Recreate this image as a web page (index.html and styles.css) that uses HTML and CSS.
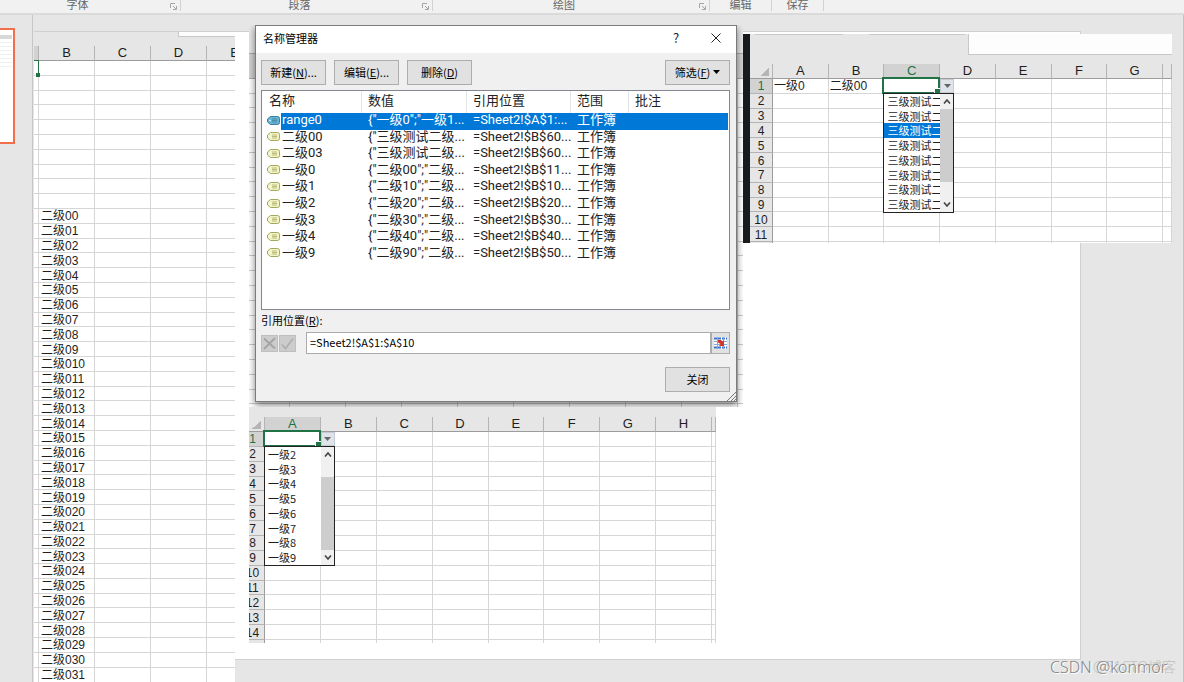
FILE: index.html
```html
<!DOCTYPE html>
<html lang="zh-CN">
<head>
<meta charset="utf-8">
<title>名称管理器</title>
<link rel="stylesheet" href="styles.css">
</head>
<body>
<header class="ribbon">
  <div class="group group-font"><span>字体</span><svg class="launcher" viewBox="0 0 7 7"><path d="M.5 5V.5H5M3 3l3 3M6.500 3v3.500H3"/></svg></div>
  <div class="group group-para"><span>段落</span><svg class="launcher" viewBox="0 0 7 7"><path d="M.5 5V.5H5M3 3l3 3M6.500 3v3.500H3"/></svg></div>
  <div class="group group-draw"><span>绘图</span><svg class="launcher" viewBox="0 0 7 7"><path d="M.5 5V.5H5M3 3l3 3M6.500 3v3.500H3"/></svg></div>
  <div class="group group-edit"><span>编辑</span></div>
  <div class="group group-save"><span>保存</span></div>
</header>
<main class="workspace">
  <aside class="thumbs"><div class="thumb"><div class="thumb-sheet"></div></div></aside>
  <section class="stage">
    <div class="slide">

      <div class="picture pic-left">
        <div class="band"><div class="band-box"></div></div>
        <table class="sheet sheet-left" data-rows="42" data-cols="B,C,D,E" data-sliver="1"></table>
      </div>

      <div class="picture pic-dialog">
        <div class="dialog" role="dialog" aria-labelledby="dlg-title">
          <div class="titlebar">
            <h1 id="dlg-title">名称管理器</h1>
            <button class="tb-btn help" aria-label="帮助">?</button>
            <button class="tb-btn" aria-label="关闭窗口"><svg width="10" height="10" viewBox="0 0 10 10"><path d="M.5.5l9 9M9.500.5l-9 9" stroke="#222" fill="none"/></svg></button>
          </div>
          <div class="dialog-body">
            <div class="toolbar">
              <button class="btn">新建(<u>N</u>)...</button>
              <button class="btn">编辑(<u>E</u>)...</button>
              <button class="btn">删除(<u>D</u>)</button>
              <button class="btn filter"><span>筛选(<u>F</u>)</span><svg width="7" height="4" viewBox="0 0 7 4"><path d="M0 0h7L3.500 4z"/></svg></button>
            </div>
            <div class="listbox">
              <table class="names">
                <colgroup><col class="c-name"><col class="c-value"><col class="c-ref"><col class="c-scope"><col></colgroup>
                <thead><tr><th>名称</th><th>数值</th><th>引用位置</th><th>范围</th><th>批注</th></tr></thead>
                <tbody id="names"></tbody>
              </table>
            </div>
            <label class="ref-label" for="ref">引用位置(<u>R</u>):</label>
            <div class="ref-row">
              <button class="mini" disabled aria-label="取消"><svg width="15" height="15" viewBox="0 0 15 15"><path d="M2 2.500l11 10M13 2L2 13" stroke="#a3a3a3" stroke-width="1.800" fill="none"/></svg></button>
              <button class="mini" disabled aria-label="确认"><svg width="15" height="15" viewBox="0 0 15 15"><path d="M2 8.500l3.500 4L13 2.500" stroke="#b0b0b0" stroke-width="1.800" fill="none"/></svg></button>
              <div class="field"><input id="ref" type="text" value="=Sheet2!$A$1:$A$10"><button class="picker" aria-label="选择区域"><svg width="13" height="12" viewBox="0 0 13 12"><path fill="#fff" d="M0 0h13v12H0z"/><path d="M0 1.500h13M0 10.500h13" stroke="#3d6fc4" stroke-width="2" stroke-dasharray="3 1"/><path d="M0 4.500h13M0 7.500h13M3.500 0v12M9.500 0v12" stroke="#86a9dc"/><path d="M4 3h3l1.500 1.500L10 3.500V9H5l1.500-2L4 5.500z" fill="#d8331f"/></svg></button></div>
            </div>
            <div class="actions"><button class="btn">关闭</button></div>
          </div>
          <svg class="grip" width="9" height="9" viewBox="0 0 9 9"><path d="M0 9L9 0M4 9l5-5M7 9l2-2" stroke="#777" fill="none"/></svg>
        </div>
      </div>

      <div class="picture pic-right">
        <div class="band"><div class="tab-edge"></div><div class="tab-edge"></div><div class="band-box"></div></div>
        <table class="sheet sheet-right" data-rows="12" data-cols="A,B,C,D,E,F,G," data-active="C" data-list="三级测试二,三级测试二,三级测试二,三级测试二,三级测试二,三级测试二,三级测试二,三级测试二" data-picked="2"></table>
      </div>

      <div class="picture pic-lower">
        <div class="band"></div>
        <table class="sheet sheet-lower" data-rows="15" data-cols="A,B,C,D,E,F,G,H," data-active="A" data-list="一级2,一级3,一级4,一级5,一级6,一级7,一级8,一级9" data-picked="-1"></table>
      </div>
    </div>
    <div class="watermark"><span class="wm-back">@51CTO博客</span><span class="wm-front">CSDN @konmor</span></div>
  </section>
</main>
<script src="script.js"></script>
</body>
</html>
```
FILE: styles.css
```css
* { box-sizing: border-box; }
body {
  margin: 0;
  height: 100vh;
  display: flex;
  flex-direction: column;
  overflow: hidden;
  background: #e6e6e6;
  color: #1e1e1e;
  font: 11px/14px "Noto Sans CJK SC", sans-serif;
}
button, input { font: inherit; color: inherit; margin: 0; padding: 0; border-radius: 0; }

.ribbon {
  flex: none;
  display: flex;
  height: 15px;
  background: #f1f1f1;
  border-bottom: 2px solid #dadada;
  color: #666;
}
.group {
  display: flex;
  justify-content: center;
  position: relative;
  height: 11px;
  line-height: 9px;
  border-right: 1px solid #d2d2d2;
}
.group-font { width: 181px; padding-right: 25px; }
.group-para { width: 252px; padding-right: 14px; }
.group-draw { width: 277px; padding-right: 14px; }
.group-edit { width: 62px; }
.group-save { width: 52px; }
.launcher {
  position: absolute;
  right: 3px;
  top: 3px;
  width: 7px;
  height: 7px;
  fill: none;
  stroke: #a5a5a5;
}

.workspace { flex: 1; display: flex; min-height: 0; }
.thumbs { width: 33px; flex: none; border-right: 1px solid #c6c6c6; padding-top: 13px; }
.thumb {
  width: 15px;
  height: 116px;
  background: #fff;
  border: 2px solid #f36f4b;
  border-left: 0;
  padding-top: 5px;
}
.thumb-sheet {
  height: 33px;
  border-top: 4px solid #d8d8d8;
  background: repeating-linear-gradient(#fff 0 3px, #f0f0f0 3px 4px);
  margin-right: 1px;
}

.stage {
  flex: 1;
  position: relative;
  display: flex;
  min-width: 0;
  padding: 16px 102px 22px 1px;
  border-right: 1px solid #c3c3c3;
  overflow: hidden;
}
.slide {
  flex: 1;
  position: relative;
  background: #fff;
  border: 1px solid #d0d0d0;
  border-left: 0;
}

.picture { position: absolute; overflow: hidden; background: #fff; }
.pic-left { left: 0; top: 0; bottom: -23px; width: 201px; }
.pic-dialog { left: 215px; top: -7px; width: 494px; height: 382px; }
.pic-right { left: 709px; top: 2px; width: 429px; height: 209px; border-left: 7px solid #171b1e; }
.pic-lower { left: 215px; top: 375px; width: 467px; height: 236px; }

.band { display: flex; background: #e6e6e6; }
.band-box { background: #fdfdfd; border: 1px solid #c8c8c8; border-top: 0; border-right: 0; }
.pic-left .band { height: 14px; justify-content: flex-end; }
.pic-left .band-box { width: 57px; height: 5px; }
.pic-right .band { height: 30px; padding-left: 5px; }
.pic-right .band-box { flex: 1; height: 21px; }
.tab-edge { width: 88px; height: 1px; background: #c8c8c8; margin-right: 26px; }
.tab-edge + .tab-edge { width: 96px; margin-right: 3px; }
.pic-lower .band { height: 10px; }

.sheet {
  table-layout: fixed;
  border-collapse: separate;
  border-spacing: 0;
  font: 12px/12px "Liberation Sans", "Noto Sans CJK SC", sans-serif;
  white-space: nowrap;
}
.sheet th, .sheet td { padding: 0; border: 0 solid #d6d6d6; border-width: 0 1px 1px 0; }
.sheet tbody th, .sheet tbody td { height: 14px; padding-top: 1px; }
.sheet tbody td { padding-left: 1px; text-align: left; }
.sheet-left tbody td { padding-left: 2px; }
.sheet th { font-weight: 400; background: #e6e6e6; border-color: #b4b4b4; }
.sheet thead th { height: 15px; font-size: 13px; border-bottom-color: #9c9c9c; }
.sheet tbody th { border-right-color: #9c9c9c; }
.sheet .on { background: #d2d2d2; color: #217346; }
.sheet thead .on { border-bottom-color: #217346; }
.sheet .corner { background: linear-gradient(135deg, #e6e6e6 50%, #b5b5b5 50%) no-repeat right 3px bottom 2px / 9px 9px #e6e6e6; }
.sheet-left { width: 229px; height: 637px; }
.sheet-left .col-head { width: 5px; }
.sheet-left .col { width: 56px; }
.sheet-right { width: 422px; height: 193px; }
.sheet-right .col-head { width: 23px; }
.sheet-lower { width: 475px; height: 238px; margin-left: -8px; }
.sheet-lower .col-head { width: 24px; }
.sheet .col-tail { width: 9px; }
.sheet-lower .col-tail { width: 4px; }

.sheet .active { position: relative; }
.cursor {
  position: absolute;
  inset: -2px -1px -1px -2px;
  border: 2px solid #217346;
}
.cursor::after {
  content: "";
  position: absolute;
  right: -3px;
  bottom: -3px;
  width: 5px;
  height: 5px;
  background: #217346;
  border: 1px solid #fff;
}
.drop-btn {
  position: absolute;
  left: 100%;
  top: 0;
  width: 14px;
  height: 14px;
  margin-left: 1px;
  border: 1px solid #c5cad3;
  background: #dfe3ea;
  display: grid;
  place-items: center;
}
.drop {
  position: absolute;
  z-index: 2;
  left: -1px;
  top: 100%;
  width: 71px;
  height: 120px;
  display: flex;
  background: #fff;
  border: 1px solid #222;
  font: 11px/14px "Noto Sans CJK SC", sans-serif;
}
.drop ul {
  flex: 1;
  display: flex;
  flex-direction: column;
  margin: 0;
  padding: 0;
  list-style: none;
  overflow: hidden;
}
.drop li { flex: 1; padding-left: 3px; overflow: hidden; }
.drop .picked { background: #0078d7; color: #fff; }
.scroll {
  width: 13px;
  display: flex;
  flex-direction: column;
  align-items: center;
  background: #f0f0f0;
}
.scroll svg { flex: none; margin: 5px 0; }
.scroll-thumb { width: 100%; height: 73px; background: #cdcdcd; }
.sheet-lower .scroll-thumb { margin-top: auto; }
.sheet-right .scroll-thumb { margin-bottom: auto; }

.corner-mark { position: absolute; left: 0; top: -1px; width: 5px; height: 17px; border-right: 1px solid #217346; }
.corner-mark::after { content: ""; position: absolute; right: -2px; bottom: 0; width: 4px; height: 4px; background: #217346; }

.pic-dialog {
  padding: 0 6px 5px;
  background:
    linear-gradient(transparent 28px, #a8a8a8 28px 29px, #d2d2d2 29px 53px, #a8a8a8 53px 54px, transparent 54px),
    linear-gradient(#e6e6e6 53px, transparent 53px),
    repeating-linear-gradient(transparent 0 8px, #c9c9c9 8px 9px, transparent 9px 23px, #c9c9c9 23px 24px, transparent 24px 38px, #c9c9c9 38px 39px, transparent 39px 53px, #c9c9c9 53px 54px, transparent 54px 68px, #c9c9c9 68px 69px, transparent 69px 74px),
    repeating-linear-gradient(90deg, transparent 0 40px, #c9c9c9 40px 41px, transparent 41px 56px),
    #fff;
}
.dialog {
  position: relative;
  height: 100%;
  display: flex;
  flex-direction: column;
  background: #f0f0f0;
  border: 1px solid #7b7b7b;
  box-shadow: 0 3px 7px rgba(0, 0, 0, .5);
}
.titlebar { display: flex; align-items: center; height: 27px; background: #fff; padding: 0 14px 3px 7px; }
.titlebar h1 { flex: 1; margin: 0; font: inherit; color: #000; }
.tb-btn { border: 0; background: none; width: 12px; height: 14px; padding: 0; display: grid; place-items: center; }
.help { margin-right: 28px; font-size: 13px; }
.dialog-body { flex: 1; display: flex; flex-direction: column; padding: 7px 6px 9px 5px; color: #000; }
.toolbar { display: flex; gap: 8px; margin-bottom: 5px; }
.btn { width: 65px; height: 25px; padding-bottom: 2px; background: #e1e1e1; border: 1px solid #adadad; }
.filter { margin-left: auto; display: flex; align-items: center; justify-content: center; gap: 3px; }
.listbox { flex: 1; background: #fff; border: 1px solid #828790; padding: 0 1px; }
.names {
  width: 100%;
  height: 171px;
  table-layout: fixed;
  border-collapse: separate;
  border-spacing: 0;
  font: 13px/14px Roboto, "Noto Sans CJK SC", sans-serif;
  white-space: nowrap;
}
.names th { height: 22px; padding: 0 0 2px 6px; font-weight: 400; text-align: left; border-right: 1px solid #e5e5e5; color: #222; }
.names th:last-child { border: 0; }
.names td { padding: 0 0 2px 6px; color: #222; }
.names td:first-child { padding-left: 4px; }
.names .c-name { width: 99px; }
.names .c-value { width: 105px; }
.names .c-ref { width: 104px; }
.names .c-scope { width: 58px; }
.names .name { display: flex; align-items: center; gap: 2px; }
.names .picked td { background: #0078d7; color: #fff; }
.names .picked td:first-child { background: linear-gradient(90deg, #fff 18px, #0078d7 18px); }
.ref-label { line-height: 20px; padding-bottom: 2px; }
.ref-row { display: flex; align-items: center; gap: 1px; height: 22px; }
.mini { width: 17px; height: 17px; background: #ccc; border: 1px solid #bfbfbf; display: grid; place-items: center; }
.field { flex: 1; display: flex; height: 22px; margin-left: 9px; }
.field input { flex: 1; min-width: 0; border: 1px solid #ababab; background: #fff; padding: 0 3px 2px; }
.picker { width: 19px; border: 1px solid #adadad; background: #e1e1e1; display: grid; place-items: center; }
.actions { display: flex; justify-content: flex-end; margin-top: 13px; }
.grip { position: absolute; right: 0; bottom: 0; }

.watermark { position: absolute; right: 7px; bottom: 4px; width: 126px; height: 22px; font: 16px/22px "Noto Sans", "Noto Sans CJK SC", sans-serif; font-weight: 300; white-space: nowrap; }
.wm-back { position: absolute; right: 0; top: 0; color: #c0c0c0; font-size: 14px; }
.wm-front { position: absolute; left: 0; top: 0; color: #858585; text-shadow: 1px 1px 0 #fff; }
```
FILE: script.js
```js
const svg = (w, h, d, attrs) => `<svg width="${w}" height="${h}" viewBox="0 0 ${w} ${h}"><path d="${d}" ${attrs}/></svg>`;
const stroke = 'fill="none" stroke="#444" stroke-width="1.6"';

function dropList(items, picked) {
  const lis = items.map((t, i) => `<li role="option"${i === picked ? ' class="picked" aria-selected="true"' : ''}>${t}</li>`).join('');
  return `<div class="cursor"></div>
    <button class="drop-btn" aria-label="展开列表">${svg(7, 4, 'M0 0h7L3.5 4z', 'fill="#666"')}</button>
    <div class="drop"><ul role="listbox">${lis}</ul>
    <div class="scroll">${svg(8, 5, 'M1 4.5L4 1l3 3.5', stroke)}<div class="scroll-thumb"></div>${svg(8, 5, 'M1 .5L4 4 7 .5', stroke)}</div></div>`;
}

function cellText(table, row, col) {
  if (table.dataset.sliver) return col === 'B' && row > 10 ? '二级0' + (row - 11) : '';
  if (table.dataset.active === 'C' && row === 1) return { A: '一级0', B: '二级00' }[col] || '';
  return '';
}

document.querySelectorAll('.sheet').forEach(table => {
  const d = table.dataset;
  const cols = d.cols.split(',');
  let html = '<colgroup><col class="col-head">' + cols.map(c => `<col class="${c ? 'col' : 'col-tail'}">`).join('') + '</colgroup>';
  html += `<thead><tr><th class="${d.sliver ? 'on' : 'corner'}"></th>` + cols.map(c => `<th${c && c === d.active ? ' class="on"' : ''}>${c}</th>`).join('') + '</tr></thead><tbody>';
  for (let r = 1; r <= +d.rows; r++) {
    html += '<tr>';
    if (d.sliver) html += r === 1 ? '<td class="active"><div class="corner-mark"></div></td>' : '<td></td>';
    else html += `<th${r === 1 ? ' class="on"' : ''}>${r}</th>`;
    for (const c of cols) {
      const active = r === 1 && c && c === d.active;
      html += active ? `<td class="active">${dropList(d.list.split(','), +d.picked)}</td>` : `<td>${cellText(table, r, c)}</td>`;
    }
    html += '</tr>';
  }
  table.innerHTML = html + '</tbody>';
});

const names = [
  ['range0', '{"一级0";"一级1...', '=Sheet2!$A$1:...'],
  ['二级00', '{"三级测试二级...', '=Sheet2!$B$60...'],
  ['二级03', '{"三级测试二级...', '=Sheet2!$B$60...'],
  ['一级0', '{"二级00";"二级...', '=Sheet2!$B$11...'],
  ['一级1', '{"二级10";"二级...', '=Sheet2!$B$10...'],
  ['一级2', '{"二级20";"二级...', '=Sheet2!$B$20...'],
  ['一级3', '{"二级30";"二级...', '=Sheet2!$B$30...'],
  ['一级4', '{"二级40";"二级...', '=Sheet2!$B$40...'],
  ['一级9', '{"二级90";"二级...', '=Sheet2!$B$50...']
];
document.getElementById('names').innerHTML = names.map(([n, v, ref], i) => {
  const [edge, fill] = i ? ['#a3a860', '#f1f3c4'] : ['#3b7f9c', '#66b4d4'];
  const tag = `<svg width="13" height="9" viewBox="0 0 13 9"><path d="M3.500.5h7a2 2 0 0 1 2 2v4a2 2 0 0 1-2 2h-7L.5 6V3z" fill="${fill}" stroke="${edge}"/><path d="M5 3h5M5 4.500h5M5 6h5" stroke="${edge}" stroke-width=".7"/><circle cx="3" cy="4.500" r=".8" fill="#fff"/></svg>`;
  return `<tr${i ? '' : ' class="picked"'}><td><div class="name">${tag}${n}</div></td><td>${v}</td><td>${ref}</td><td>工作簿</td><td></td></tr>`;
}).join('');
```
